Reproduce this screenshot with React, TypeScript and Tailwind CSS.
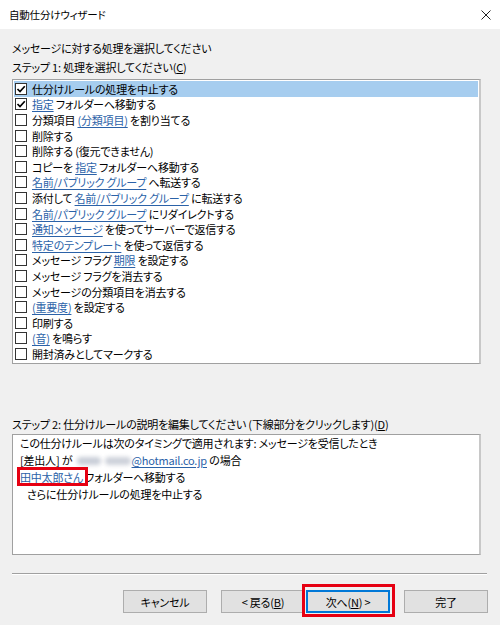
import React from "react";

type Part = string | { link: string };

const rows: { parts: Part[]; checked?: boolean; selected?: boolean }[] = [
  { parts: ["仕分けルールの処理を中止する"], checked: true, selected: true },
  { parts: [{ link: "指定" }, " フォルダーへ移動する"], checked: true },
  { parts: ["分類項目 ", { link: "(分類項目)" }, " を割り当てる"] },
  { parts: ["削除する"] },
  { parts: ["削除する (復元できません)"] },
  { parts: ["コピーを ", { link: "指定" }, " フォルダーへ移動する"] },
  { parts: [{ link: "名前/パブリック グループ" }, " へ転送する"] },
  { parts: ["添付して ", { link: "名前/パブリック グループ" }, " に転送する"] },
  { parts: [{ link: "名前/パブリック グループ" }, " にリダイレクトする"] },
  { parts: [{ link: "通知メッセージ" }, " を使ってサーバーで返信する"] },
  { parts: [{ link: "特定のテンプレート" }, " を使って返信する"] },
  { parts: ["メッセージ フラグ ", { link: "期限" }, " を設定する"] },
  { parts: ["メッセージ フラグを消去する"] },
  { parts: ["メッセージの分類項目を消去する"] },
  { parts: [{ link: "(重要度)" }, " を設定する"] },
  { parts: ["印刷する"] },
  { parts: [{ link: "(音)" }, " を鳴らす"] },
  { parts: ["開封済みとしてマークする"] },
];

function Link({ children }: { children: React.ReactNode }) {
  return <span className="text-[#2b62a8] underline underline-offset-[2px] decoration-[1px]">{children}</span>;
}

function CheckBox({ checked }: { checked?: boolean }) {
  return (
    <span className="w-[12px] h-[12px] border border-[#333333] bg-white flex items-center justify-center shrink-0">
      {checked && (
        <svg width="10" height="10" viewBox="0 0 10 10">
          <path d="M1.5 5 L4 7.5 L8.8 2.2" stroke="#000" strokeWidth="1.7" fill="none" />
        </svg>
      )}
    </span>
  );
}

function Btn({ children, focused }: { children: React.ReactNode; focused?: boolean }) {
  return (
    <div
      className={
        "w-[84px] h-[23px] flex items-center justify-center bg-[#e1e1e1] text-black " +
        (focused ? "border-2 border-[#0078d7]" : "border border-[#adadad]")
      }
    >
      {children}
    </div>
  );
}

export default function App() {
  return (
    <div className="w-[500px] h-[625px] bg-[#f0f0f0] flex flex-col text-black text-[11px] leading-[16px] tracking-[-0.2px] font-['Noto_Sans_CJK_JP','Noto_Sans',sans-serif] [font-feature-settings:'palt'] overflow-hidden">
      {/* Title bar */}
      <div className="h-[29px] bg-white flex items-center justify-between pl-[9px] pr-[9px] shrink-0">
        <span className="text-[10.5px]">自動仕分けウィザード</span>
        <svg width="10" height="10" viewBox="0 0 10 10">
          <path d="M0.5 0.5 L9.5 9.5 M9.5 0.5 L0.5 9.5" stroke="#222" strokeWidth="1" />
        </svg>
      </div>

      <div className="px-[12px] flex flex-col">
        <div className="mt-[11px] h-[16px]">メッセージに対する処理を選択してください</div>
        <div className="mt-[3px] h-[16px]">
          ステップ 1: 処理を選択してください(<span className="underline">C</span>)
        </div>

        {/* Action list */}
        <div className="mt-[4px] w-[469px] h-[285px] bg-white border border-[#a0a0a0] border-r-2 border-r-[#c8c8c8] p-[1px]">
          {rows.map((r, i) => (
            <div
              key={i}
              className={"h-[15.6px] flex items-center gap-[5px] pl-[1px] " + (r.selected ? "bg-[#a6cdef]" : "")}
            >
              <CheckBox checked={r.checked} />
              <span className="whitespace-pre">
                {r.parts.map((p, j) =>
                  typeof p === "string" ? <span key={j}>{p}</span> : <Link key={j}>{p.link}</Link>
                )}
              </span>
            </div>
          ))}
        </div>

        <div className="mt-[52px] h-[16px]">
          ステップ 2: 仕分けルールの説明を編集してください (下線部分をクリックします)(<span className="underline">D</span>)
        </div>

        {/* Description box */}
        <div className="mt-[2px] w-[469px] h-[121px] bg-white border border-[#a0a0a0] border-r-2 border-r-[#c8c8c8] pl-[7px] leading-[17px]">
          <div>この仕分けルールは次のタイミングで適用されます: メッセージを受信したとき</div>
          <div className="flex items-center whitespace-pre">
            <span>[差出人] が </span>
            <span className="relative inline-block w-[57px] h-[12px]">
              <span className="absolute left-[2px] top-[2px] w-[24px] h-[8px] bg-[#c9ced8] blur-[2px] rounded-sm" />
              <span className="absolute left-[30px] top-[2px] w-[26px] h-[8px] bg-[#cdd1da] blur-[2px] rounded-sm" />
            </span>
            <Link>@hotmail.co.jp</Link>
            <span> の場合</span>
          </div>
          <div className="whitespace-pre">
            <span className="relative">
              <Link>田中太郎さん</Link>
              <span className="absolute -left-[3px] -right-[5px] -top-[2px] -bottom-[1px] border-[3px] border-[#e60012]" />
            </span>
            <span> フォルダーへ移動する</span>
          </div>
          <div className="pl-[7px]">さらに仕分けルールの処理を中止する</div>
        </div>

        {/* Separator */}
        <div className="mt-[18px] w-[475px] border-t border-t-[#a0a0a0] border-b border-b-white" />

        {/* Buttons */}
        <div className="mt-[15px] flex justify-end w-[476px]">
          <Btn>キャンセル</Btn>
          <div className="w-[14px]" />
          <Btn>
            &lt; 戻る(<span className="underline">B</span>)
          </Btn>
          <div className="w-[1px]" />
          <div className="relative">
            <Btn focused>
              次へ(<span className="underline">N</span>) &gt;
            </Btn>
            <span className="absolute -left-[4px] -right-[5px] -top-[6px] -bottom-[4px] border-[3px] border-[#e60012]" />
          </div>
          <div className="w-[14px]" />
          <Btn>完了</Btn>
        </div>
      </div>
    </div>
  );
}
